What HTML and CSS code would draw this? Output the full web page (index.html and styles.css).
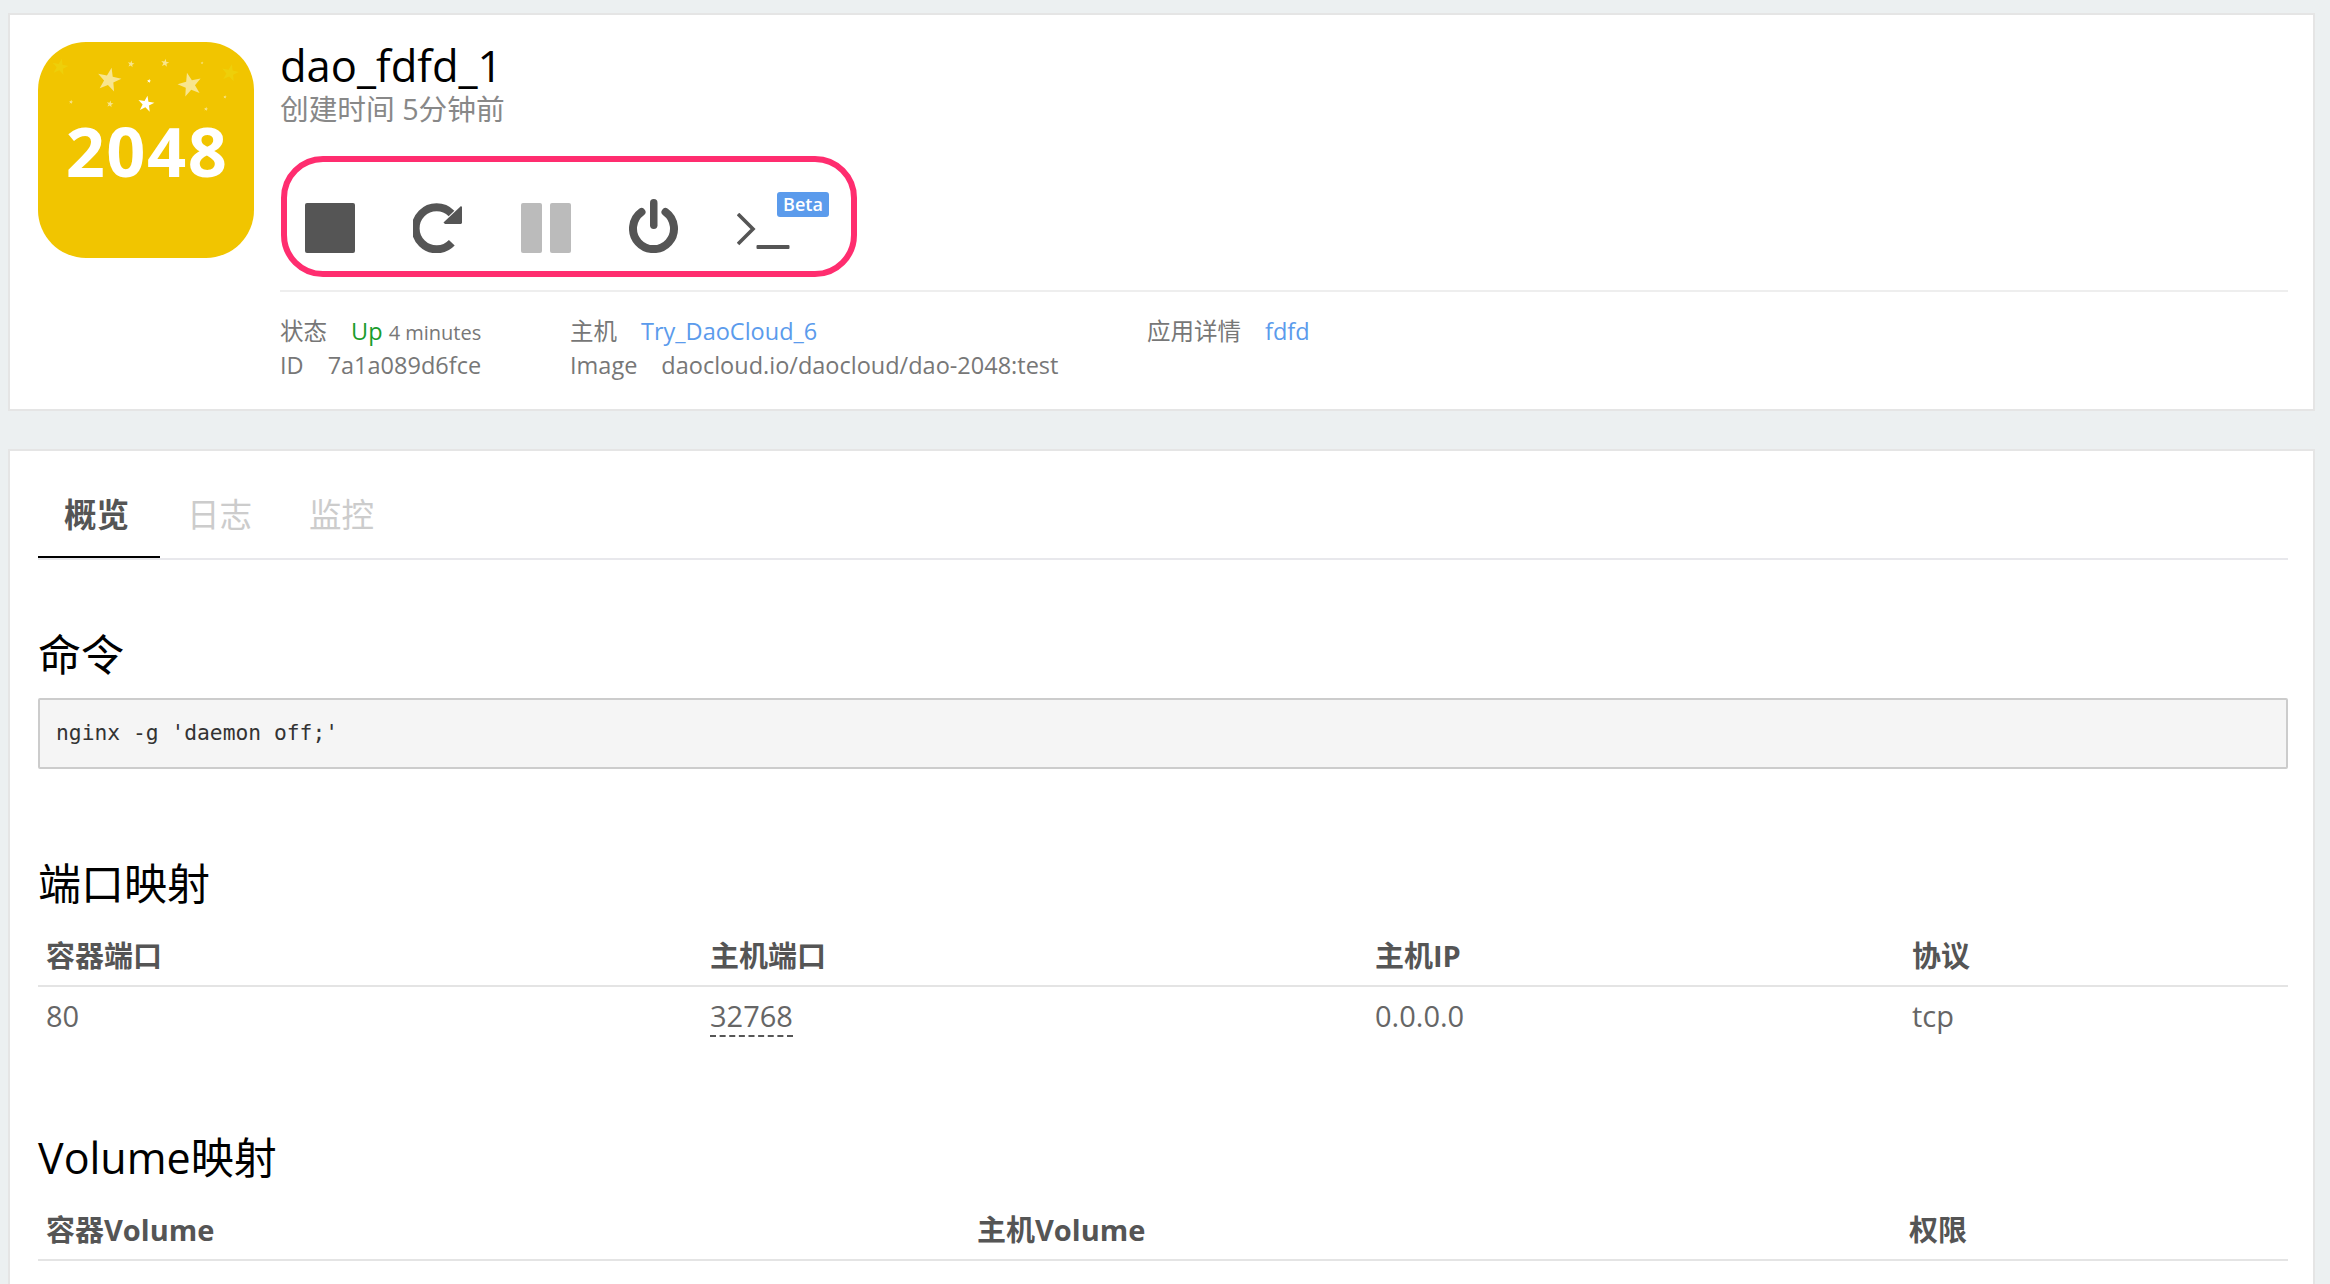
FILE: index.html
```html
<!DOCTYPE html>
<html>
<head>
<meta charset="UTF-8">
<title>dao_fdfd_1</title>
<link rel="stylesheet" href="styles.css">
</head>

<body>
<svg class="defs" width="0" height="0"><defs><polygon id="star" points="0,-10 2.35,-3.24 9.51,-3.09 3.8,1.24 5.88,8.09 0,4 -5.88,8.09 -3.8,1.24 -9.51,-3.09 -2.35,-3.24"/></defs></svg>

<div class="card head">
    <svg class="logo" width="216" height="216" viewBox="0 0 216 216">
        <rect width="216" height="216" rx="48" fill="#f1c500"/>
        <g fill="#eecf0a">
            <use href="#star" transform="translate(22 25) rotate(12) scale(.85)"/>
            <use href="#star" transform="translate(192 31) rotate(12) scale(.9)"/>
        </g>
        <g fill="#f8e58f">
            <use href="#star" transform="translate(71 38) rotate(12) scale(1.25)"/>
            <use href="#star" transform="translate(152 43) rotate(-14) scale(1.25)"/>
            <use href="#star" transform="translate(93 22) rotate(10) scale(.35)"/>
            <use href="#star" transform="translate(127 21) rotate(10) scale(.42)"/>
            <use href="#star" transform="translate(72 62) rotate(10) scale(.35)"/>
            <use href="#star" transform="translate(168 67) rotate(10) scale(.22)"/>
            <use href="#star" transform="translate(33 60) rotate(10) scale(.22)"/>
            <use href="#star" transform="translate(187 55) rotate(10) scale(.18)"/>
            <use href="#star" transform="translate(164 21) rotate(10) scale(.15)"/>
        </g>
        <g fill="#fff">
            <use href="#star" transform="translate(108 62) rotate(10) scale(.85)"/>
            <use href="#star" transform="translate(111 39) rotate(10) scale(.22)"/>
        </g>
        <text class="logo-num" x="109" y="134.5" text-anchor="middle">2048</text>
    </svg>
    <div class="head-main">
        <h1 class="title">dao_fdfd_1</h1>
        <div class="created">创建时间 5分钟前</div>
        <div class="actions">
            <svg class="ico" width="50" height="50" viewBox="0 0 50 50"><rect width="50" height="50" rx="2" fill="#555"/></svg>
            <svg class="ico" width="50" height="50" viewBox="0 0 50 50">
                <path d="M38.5 10.5A21 21 0 1 0 38.8 39.8" fill="none" stroke="#555" stroke-width="8"/>
                <path d="M48 3 49 4V20L48 21H32L30.5 19.5Z" fill="#555"/>
            </svg>
            <svg class="ico" width="50" height="50" viewBox="0 0 50 50">
                <rect width="21" height="50" rx="2" fill="#bbb"/>
                <rect x="29" width="21" height="50" rx="2" fill="#bbb"/>
            </svg>
            <svg class="ico" width="50" height="54" viewBox="0 0 50 54">
                <path d="M12.5 13A20.5 20.5 0 1 0 36.5 13" fill="none" stroke="#555" stroke-width="8" stroke-linecap="round"/>
                <rect x="21" width="7.5" height="30" rx="3.7" fill="#555"/>
            </svg>
            <div class="term">
                <svg class="ico" width="54" height="40" viewBox="0 0 54 40">
                    <path d="M1 1 16 16 1 31" fill="none" stroke="#555" stroke-width="3.6"/>
                    <rect x="19.5" y="32" width="33" height="4" rx="1" fill="#555"/>
                </svg>
                <span class="beta">Beta</span>
            </div>
        </div>
        <div class="meta">
            <div><span class="lbl">状态</span><span class="up">Up</span> <small>4 minutes</small></div>
            <div><span class="lbl">主机</span><a href="#">Try_DaoCloud_6</a></div>
            <div><span class="lbl">应用详情</span><a href="#">fdfd</a></div>
            <div><span class="lbl">ID</span>7a1a089d6fce</div>
            <div><span class="lbl">Image</span>daocloud.io/daocloud/dao-2048:test</div>
        </div>
    </div>
</div>

<div class="card body">
    <div class="tabs">
        <a class="tab active" href="#">概览</a>
        <a class="tab" href="#">日志</a>
        <a class="tab" href="#">监控</a>
    </div>

    <h2 class="first">命令</h2>
    <pre class="cmd">nginx -g 'daemon off;'</pre>

    <h2>端口映射</h2>
    <table class="ports">
        <tr><th>容器端口</th><th>主机端口</th><th>主机IP</th><th>协议</th></tr>
        <tr><td>80</td><td><span class="port">32768</span></td><td>0.0.0.0</td><td>tcp</td></tr>
    </table>

    <h2>Volume映射</h2>
    <table class="volumes">
        <tr><th>容器Volume</th><th>主机Volume</th><th>权限</th></tr>
    </table>
</div>
</body>
</html>
```

FILE: styles.css
```css
html, body { margin:0; height:1284px; overflow:hidden; }
body { padding:13px 15px 0 8px; box-sizing:border-box; background:#ecf0f1; font-family:"Open Sans","Noto Sans CJK SC",sans-serif; color:#666; }
a { text-decoration:none; color:#5b9bec; }
.defs { display:block; height:0; }

.card { background:#fff; border:2px solid #e5e5e5; }

.head { display:flex; gap:26px; padding:27px 25px 27px 28px; }
.logo { flex:none; display:block; }
.logo-num { font-family:"Open Sans",sans-serif; font-size:68.5px; font-weight:700; letter-spacing:1.5px; fill:#fff; }
.head-main { flex:1; }
.title { margin:0; font-size:43.5px; line-height:48px; font-weight:400; color:#000; }
.created { font-size:28.7px; line-height:34px; margin-top:2px; color:#888; }

.actions { display:flex; align-items:flex-end; gap:58px; box-sizing:border-box; width:576px; height:121px; margin:30px 0 13px 1px; padding:0 0 18px 18px; border:6px solid #ff2d6f; border-radius:42px; }
.ico { display:block; flex:none; }
.term { position:relative; }
.beta { position:absolute; left:40px; top:-21px; width:52px; height:25px; border-radius:3px; background:#5b9bec; color:#fff; font-size:18px; line-height:25px; font-weight:600; text-align:center; }

.meta { display:grid; grid-template-columns:290px 577px 1fr; grid-auto-rows:34px; padding-top:22px; border-top:2px solid #eee; font-size:23.5px; line-height:34px; color:#777; }
.lbl { margin-right:24px; }
.up { color:#1a9c2c; }
.meta small { font-size:20px; }

.body { margin-top:38px; padding:23px 25px 60px 28px; }
.tabs { display:flex; border-bottom:2px solid #e8e8ec; }
.tab { box-sizing:border-box; width:122px; height:84px; padding-left:27px; line-height:82px; font-size:32.5px; color:#ccc; }
.tab.active { padding-left:26px; border-bottom:2px solid #000; color:#555; font-weight:700; }

h2 { height:60px; margin:85px 0 11px; font-size:43px; line-height:60px; font-weight:400; color:#000; }
h2.first { margin-top:65px; margin-bottom:13px; }
.cmd { box-sizing:border-box; height:71px; margin:0; padding:0 16px; border:2px solid #ccc; border-radius:2px; background:#f5f5f5; font-family:"DejaVu Sans Mono",monospace; font-size:21.3px; line-height:66px; color:#333; }

table { width:100%; table-layout:fixed; border-collapse:collapse; }
th, td { height:56px; padding:0 8px; text-align:left; font-size:29px; }
th { box-sizing:border-box; height:61px; padding-bottom:3px; color:#555; font-weight:700; border-bottom:2px solid #e4e4e4; }
.ports th:nth-child(1) { width:664px; }
.ports th:nth-child(2) { width:665px; }
.ports th:nth-child(3) { width:537px; }
.volumes th:nth-child(1) { width:931px; }
.volumes th:nth-child(2) { width:932px; }
.port { border-bottom:2px dashed #555; }
```
